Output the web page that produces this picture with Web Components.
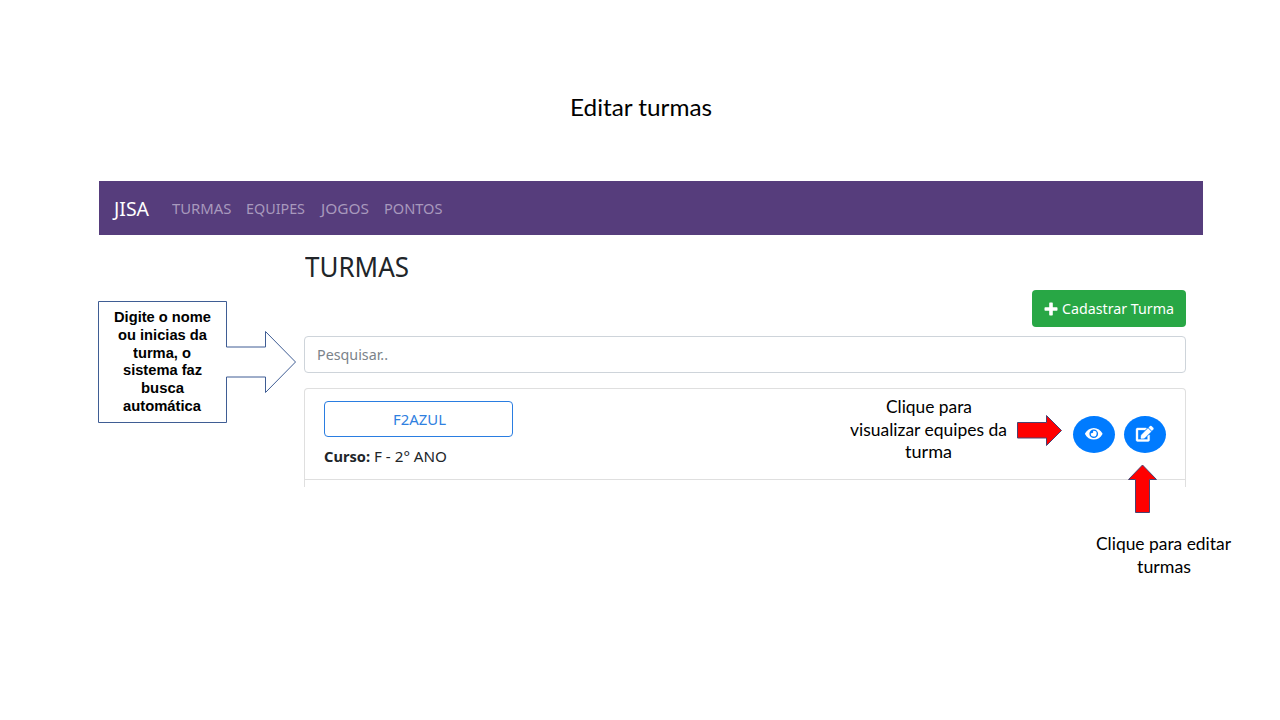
<!DOCTYPE html>
<html lang="pt-BR">
<head>
<meta charset="utf-8">
<title>Editar turmas</title>
<style>
html,body{margin:0;background:#fff}
body{width:1280px;height:720px;overflow:hidden}
</style>
</head>
<body>
<tutorial-slide>
  <fit-text slot="title" w="142">Editar turmas</fit-text>
  <jisa-app></jisa-app>
  <callout-box slot="notes"></callout-box>
  <note-label slot="notes" style="left:848px;top:396px;width:161px">
    <fit-text w="86">Clique para</fit-text><fit-text w="157">visualizar equipes da</fit-text><fit-text w="47">turma</fit-text>
  </note-label>
  <red-arrow slot="notes" style="left:1016px;top:413px"></red-arrow>
  <red-arrow slot="notes" direction="up" style="left:1126px;top:463px"></red-arrow>
  <note-label slot="notes" style="left:1093px;top:533px;width:141px">
    <fit-text w="135">Clique para editar</fit-text><fit-text w="54">turmas</fit-text>
  </note-label>
</tutorial-slide>
<script>
class Base extends HTMLElement {
  constructor() {
    super();
    const t = document.createElement('template');
    t.innerHTML = this.markup();
    this.attachShadow({mode: 'open'}).append(t.content.cloneNode(true));
  }
}

/* Text run condensed or widened to a given width */
customElements.define('fit-text', class extends Base {
  markup() { return `<style>
    :host{display:block;white-space:nowrap}
    span{display:inline-block;transform-origin:0 50%}
  </style><span><slot></slot></span>`; }
  connectedCallback() {
    const w = +this.getAttribute('w');
    this.style.width = w + 'px';
    const s = this.shadowRoot.querySelector('span');
    requestAnimationFrame(() => {
      if (s.offsetWidth) s.style.transform = `scaleX(${w / s.getBoundingClientRect().width})`;
    });
  }
});

customElements.define('tutorial-slide', class extends Base {
  markup() { return `<style>
    :host{display:block;position:relative;width:1280px;height:720px;background:#fff;overflow:hidden}
    header{display:flex;justify-content:center;align-items:center;height:40px;padding:87px 0 54px 2px;
      font:24px/40px Lato,"Noto Sans",sans-serif;color:#000}
    main{margin:0 77px 0 99px}
  </style><header><slot name="title"></slot></header><main><slot></slot></main><slot name="notes"></slot>`; }
});

customElements.define('nav-bar', class extends Base {
  markup() { return `<style>
    :host{display:flex;align-items:center;height:54px;box-sizing:border-box;padding:0 0 0 15px;background:#563d7c;
      font:15px/54px "Noto Sans",sans-serif;color:#a899bd}
    .brand{font-size:19px;color:#fff;margin-right:22.500px;padding-top:2px}
    nav{display:flex;gap:15.300px}
  </style><fit-text class="brand" w="35">JISA</fit-text>
  <nav><fit-text w="59.500">TURMAS</fit-text><fit-text w="59">EQUIPES</fit-text><fit-text w="48">JOGOS</fit-text><fit-text w="58.500">PONTOS</fit-text></nav>`; }
});

customElements.define('add-button', class extends Base {
  markup() { return `<style>
    :host{display:flex;align-items:center;box-sizing:border-box;width:154px;height:37px;padding-left:12px;
      background:#28a745;border-radius:4px;color:#fff;font:15px/37px "Noto Sans",sans-serif}
    svg{margin-right:4px}
  </style><svg width="14" height="14" viewBox="0 0 14 14"><path fill="#fff" d="M5.900.6h2.200q.7 0 .7.7v3.900h4q.7 0 .7.7v2.200q0 .7-.7.7h-4v4q0 .7-.7.7H5.900q-.7 0-.7-.7v-4h-4q-.7 0-.7-.7V5.900q0-.7.7-.7h4V1.300q0-.7.7-.7z"/></svg><fit-text w="112"><slot></slot></fit-text>`; }
});

customElements.define('search-field', class extends Base {
  markup() { return `<style>
    :host{display:block;box-sizing:border-box;height:37px;border:1px solid #ced4da;border-radius:4px;padding-left:12px;
      color:#7b838a;font:15px/34px "Noto Sans",sans-serif}
  </style><fit-text w="71">Pesquisar..</fit-text>`; }
});

customElements.define('round-button', class extends Base {
  markup() {
    const eye = '<path d="M572.520 241.400C518.290 135.590 410.930 64 288 64S57.680 135.640 3.480 241.410a32.350 32.350 0 0 0 0 29.190C57.710 376.410 165.070 448 288 448s230.320-71.640 284.520-177.410a32.350 32.350 0 0 0 0-29.190zM288 400a144 144 0 1 1 144-144 143.930 143.930 0 0 1-144 144zm0-240a95.310 95.310 0 0 0-25.310 3.790 47.850 47.850 0 0 1-66.900 66.900A95.780 95.780 0 1 0 288 160z"/>';
    const edit = '<path stroke="#fff" stroke-width="12" d="M402.600 83.200l90.200 90.200c3.800 3.800 3.800 10 0 13.800L274.400 405.600l-92.800 10.300c-12.400 1.400-22.900-9.100-21.500-21.500l10.300-92.800L388.800 83.200c3.800-3.800 10-3.800 13.800 0zm162-22.900l-48.800-48.800c-15.200-15.200-39.900-15.200-55.200 0l-35.400 35.400c-3.800 3.800-3.800 10 0 13.800l90.200 90.200c3.800 3.800 10 3.800 13.800 0l35.400-35.400c15.200-15.300 15.200-40 0-55.200zM384 346.200V448H64V128h229.800c3.200 0 6.200-1.300 8.500-3.500l40-40c7.600-7.600 2.200-20.500-8.500-20.500H48C21.500 64 0 85.500 0 112v352c0 26.500 21.500 48 48 48h352c26.500 0 48-21.500 48-48V306.200c0-10.700-12.900-16-20.500-8.500l-40 40c-2.200 2.300-3.500 5.300-3.500 8.500z"/>';
    return `<style>
    :host{display:flex;align-items:center;justify-content:center;box-sizing:border-box;width:42px;height:37px;border-radius:50%;background:#007bff;padding-bottom:1px}
    svg{fill:#fff;overflow:visible}
    </style><svg width="17.500" height="15.500" viewBox="0 0 576 512">${this.getAttribute('icon') === 'eye' ? eye : edit}</svg>`;
  }
});

customElements.define('turma-card', class extends Base {
  markup() { return `<style>
    :host{display:block;box-sizing:border-box;height:99px;border:1px solid #dfdfdf;border-bottom:0;border-radius:4px 4px 0 0;
      color:#212529;font:15px/24px "Noto Sans",sans-serif}
    .row{display:flex;box-sizing:border-box;height:91px;border-bottom:1px solid #dfdfdf;padding:12px 19px 0;justify-content:space-between}
    .name{box-sizing:border-box;width:189px;height:36px;border:1px solid #2a7de1;border-radius:4px;display:flex;justify-content:center;
      color:#2f80e0;line-height:35px;padding-left:1px}
    .course{display:flex;gap:4px;margin-top:7px}
    b{font-weight:700}
    .actions{display:flex;gap:9px;padding-top:14.500px}
  </style><div class="row"><div><div class="name"><fit-text w="53">F2AZUL</fit-text></div>
  <div class="course"><b><fit-text w="46">Curso:</fit-text></b><fit-text w="73">F - 2° ANO</fit-text></div></div>
  <div class="actions"><round-button icon="eye"></round-button><round-button icon="edit"></round-button></div></div>`; }
});

customElements.define('jisa-app', class extends Base {
  markup() { return `<style>
    :host{display:block}
    section{margin:0 17px 0 205px;padding-top:14px}
    h1{margin:0;font:400 26.600px/37px "Noto Sans",sans-serif;color:#212529;height:41px;padding-left:.5px}
    .bar{display:flex;justify-content:flex-end;height:46px}
    turma-card{margin-top:15px}
  </style><nav-bar></nav-bar><section><h1><fit-text w="104">TURMAS</fit-text></h1>
  <div class="bar"><add-button>Cadastrar Turma</add-button></div><search-field></search-field><turma-card></turma-card></section>`; }
});

customElements.define('callout-box', class extends Base {
  markup() { return `<style>
    :host{position:absolute;left:98px;top:301px;width:199px;height:122px}
    svg{position:absolute;left:0;top:0}
    div{position:relative;width:128px;padding-top:8.400px;display:flex;flex-direction:column;align-items:center;
      font:700 14.600px/17.650px "Liberation Sans",Arial,sans-serif;color:#000}
  </style><svg width="199" height="122"><path d="M.5.5H128.500V46H167.500V30.500L197.500 61 167.500 91.500V76H128.500V121.500H.5z" fill="#fff" stroke="#3f5d94"/></svg>
  <div><fit-text w="97">Digite o nome</fit-text><fit-text w="89">ou inicias da</fit-text><fit-text w="58">turma, o</fit-text><fit-text w="79">sistema faz</fit-text><fit-text w="43">busca</fit-text><fit-text w="78">automática</fit-text></div>`; }
});

customElements.define('note-label', class extends Base {
  markup() { return `<style>
    :host{position:absolute;display:flex;flex-direction:column;align-items:center;
      font:16.800px/22.700px Lato,"Noto Sans",sans-serif;color:#000}
  </style><slot></slot>`; }
});

customElements.define('red-arrow', class extends Base {
  markup() {
    return this.getAttribute('direction') === 'up'
      ? `<style>:host{position:absolute}svg{display:block}</style><svg width="33" height="52"><path d="M16.500 2L30.500 16.500H23.500V49.500H9.500V16.500H2.500z" fill="#f00" stroke="#4a4270"/></svg>`
      : `<style>:host{position:absolute}svg{display:block}</style><svg width="48" height="35"><path d="M1.500 9.500H30.500V2.500L45.500 17.500 30.500 32.500V25H1.500z" fill="#f00" stroke="#4a4270"/></svg>`;
  }
});
</script>
</body>
</html>
